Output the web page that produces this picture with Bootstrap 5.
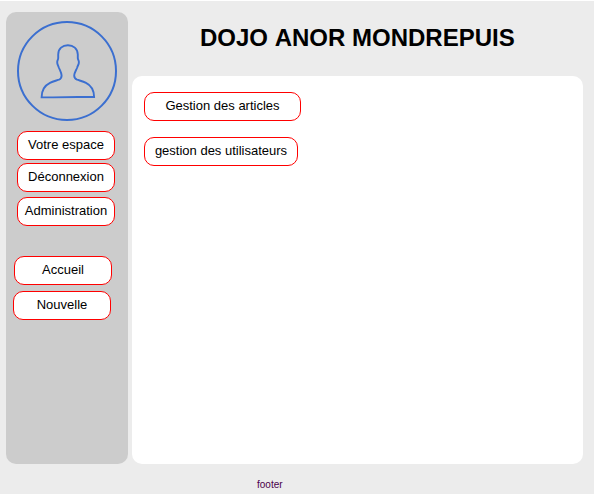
<!DOCTYPE html>
<html lang="fr">
<head>
<meta charset="utf-8">
<meta name="viewport" content="width=device-width, initial-scale=1">
<title>Dojo Anor Mondrepuis</title>
<link href="https://cdn.jsdelivr.net/npm/bootstrap@5.3.0/dist/css/bootstrap.min.css" rel="stylesheet">
<style>
body { font-family: "Liberation Sans", Arial, sans-serif; font-size: 13px; color: #000; background: #ececec; }
.page { width: 594px; height: 494px; border-top: 1px solid #fff; padding: 11px 11px 0 6px; }
.frame { height: 452px; gap: 4px; }
.side { width: 122px; background: #ccc; border-radius: 10px; padding: 9px 0 0 11px; }
.avatar { width: 100px; height: 100px; margin-bottom: 10px; }
.pill { height: 29px; width: 98px; padding: 0 0 2px; font-size: 13px; line-height: 1; color: #000; background: #fff; border: 1px solid #f00; border-radius: 10px; white-space: nowrap; }
.pill:hover { color: #000; background: #fff; border-color: #f00; }
.gap-s { margin-top: 3px; }
.gap-m { margin-top: 5px; }
.home { margin: 30px 0 0 -3px; }
.news { margin: 6px 0 0 -4px; }
.title { height: 64px; margin: 0; padding: 12px 0 0 68px; font-size: 24px; line-height: 28px; font-weight: 700; font-kerning: none; white-space: nowrap; }
.panel { background: #fff; border-radius: 10px; padding: 16px 12px; gap: 16px; }
.articles { width: 157px; }
.users { width: 154px; }
.foot { margin: 15px 0 0 251px; font-size: 10px; line-height: 12px; color: #4b004b; }
</style>
<script src="https://cdn.jsdelivr.net/npm/bootstrap@5.3.0/dist/js/bootstrap.bundle.min.js"></script>
</head>
<body>
<div class="page overflow-hidden">
  <div class="frame d-flex">
    <aside class="side d-flex flex-column align-items-start flex-shrink-0">
      <svg class="avatar flex-shrink-0" viewBox="0 0 100 100" fill="none" stroke="#3b6fd0" stroke-width="2">
        <circle cx="50" cy="50" r="49"/>
        <path stroke-width="1.9" stroke-linejoin="miter" d="M24.600 76.400C24.600 70 27.500 64.500 33 61.800C36 60.300 39.500 59.500 42 58.600C44 57.800 44.600 57 44.600 54.500C44.600 52 43 49.500 41.800 46.500C41.300 44.500 40.100 43.500 40.200 41C40.300 39.200 41.300 38.500 41.200 37V33.500C41.200 27.500 45.500 24.200 50.900 24.200C56.300 24.200 60.600 27.500 60.800 33.500V37C60.700 38.500 61.800 39.200 61.900 41C62 43.500 60.700 44.500 60.200 46.500C59 49.500 57.200 52 57.200 54.500C57.200 57 58 57.800 60 58.600C62.500 59.500 66 60.300 69 61.800C74.500 64.500 77 70 77.100 76H61L36 76.400Z"/>
      </svg>
      <button type="button" class="btn pill">Votre espace</button>
      <button type="button" class="btn pill gap-s">Déconnexion</button>
      <button type="button" class="btn pill gap-m">Administration</button>
      <button type="button" class="btn pill home">Accueil</button>
      <button type="button" class="btn pill news">Nouvelle</button>
    </aside>
    <div class="d-flex flex-column flex-grow-1">
      <h1 class="title">DOJO ANOR MONDREPUIS</h1>
      <main class="panel d-flex flex-column align-items-start flex-grow-1">
        <button type="button" class="btn pill articles">Gestion des articles</button>
        <button type="button" class="btn pill users">gestion des utilisateurs</button>
      </main>
    </div>
  </div>
  <footer class="foot">footer</footer>
</div>
</body>
</html>
